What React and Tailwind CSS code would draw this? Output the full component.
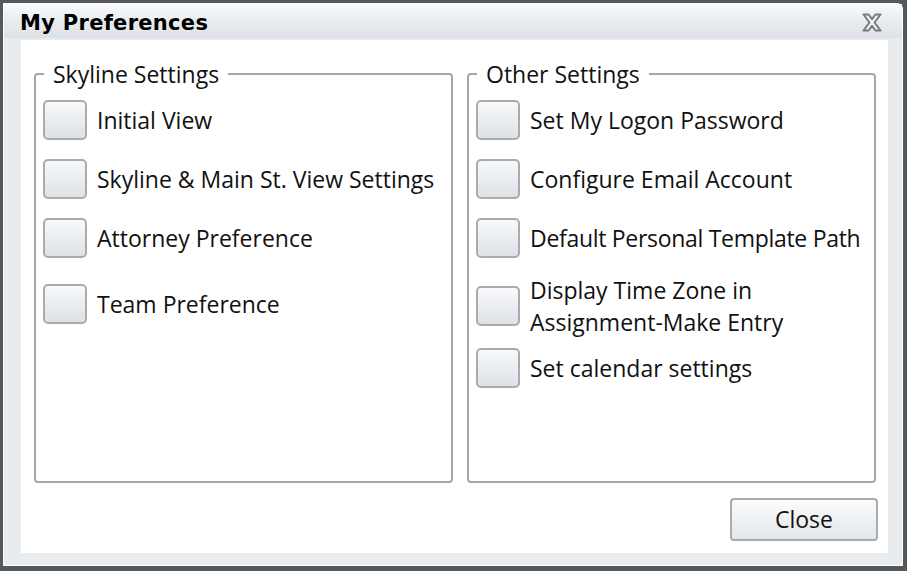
import React from 'react';

const body = { fontFamily: '"Open Sans", "Noto Sans", sans-serif' };

function Check({ label }) {
    return (
        <div className="flex items-center gap-[10px]">
            <div className="w-[44px] h-[40px] shrink-0 rounded-[5px] border-2 border-[#a9abad] bg-gradient-to-b from-[#f8f9fb] to-[#dde2e7]" />
            <span className="text-[23px] leading-[32px] text-[#111] whitespace-nowrap">{label}</span>
        </div>
    );
}

function Group({ title, className, children }) {
    return (
        <fieldset className={`border-2 border-[#a7a7a7] rounded-[4px] px-[7px] min-w-0 ${className}`}>
            <legend className="ml-[1px] px-[9px] text-[23px] leading-[24px] text-[#111]">{title}</legend>
            {children}
        </fieldset>
    );
}

export default function App() {
    return (
        <div className="w-[907px] h-[571px] bg-[#55595c] pt-[3px] pl-[3px] pr-[4px] pb-[5px]" style={body}>
            <div className="h-full rounded-tr-[6px] border border-white bg-[#e9ecef] flex flex-col">
                <div className="h-[34px] shrink-0 flex items-center justify-between pt-[6px] pl-[16px] pr-[20px] bg-gradient-to-b from-[#f7f9fb] to-[#dde1e5]">
                    <span className="text-[21px] font-bold text-black tracking-[0.3px]" style={{ fontFamily: '"DejaVu Sans", Verdana, sans-serif' }}>
                        My Preferences
                    </span>
                    <svg width="20" height="19" viewBox="0 0 20 19" className="mt-[-3px]">
                        <path
                            d="M1.5 1.5h5l3.5 4.6 3.5-4.6h5l-6 8 6 8h-5l-3.5-4.6-3.5 4.6h-5l6-8z"
                            fill="#f2f4f6"
                            stroke="#76797c"
                            strokeWidth="2"
                            strokeLinejoin="round"
                        />
                    </svg>
                </div>
                <div className="flex-1 flex flex-col mt-[2px] ml-[17px] mr-[14px] mb-[12px] bg-white pl-[13px] pr-[12px] pt-[22px] pb-[12px]">
                    <div className="flex gap-[14px] h-[421px]">
                        <Group title="Skyline Settings" className="w-[419px] shrink-0">
                            <div className="flex flex-col pt-[14px]">
                                <Check label="Initial View" />
                                <div className="mt-[19px]"><Check label="Skyline & Main St. View Settings" /></div>
                                <div className="mt-[19px]"><Check label="Attorney Preference" /></div>
                                <div className="mt-[26px]"><Check label="Team Preference" /></div>
                            </div>
                        </Group>
                        <Group title="Other Settings" className="w-[409px] shrink-0">
                            <div className="flex flex-col pt-[14px]">
                                <Check label="Set My Logon Password" />
                                <div className="mt-[19px]"><Check label="Configure Email Account" /></div>
                                <div className="mt-[19px]"><Check label={<span className="tracking-[-0.3px]">Default Personal Template Path</span>} /></div>
                                <div className="mt-[16px]">
                                    <Check label={<>Display Time Zone in<br />Assignment-Make Entry</>} />
                                </div>
                                <div className="mt-[10px]"><Check label="Set calendar settings" /></div>
                            </div>
                        </Group>
                    </div>
                    <div className="flex justify-end mt-auto mr-[-2px]">
                        <button className="w-[148px] h-[43px] rounded-[4px] border-2 border-[#a9abad] bg-gradient-to-b from-[#fbfcfd] to-[#e2e6ea] text-[23px] text-[#111]">
                            Close
                        </button>
                    </div>
                </div>
            </div>
        </div>
    );
}
